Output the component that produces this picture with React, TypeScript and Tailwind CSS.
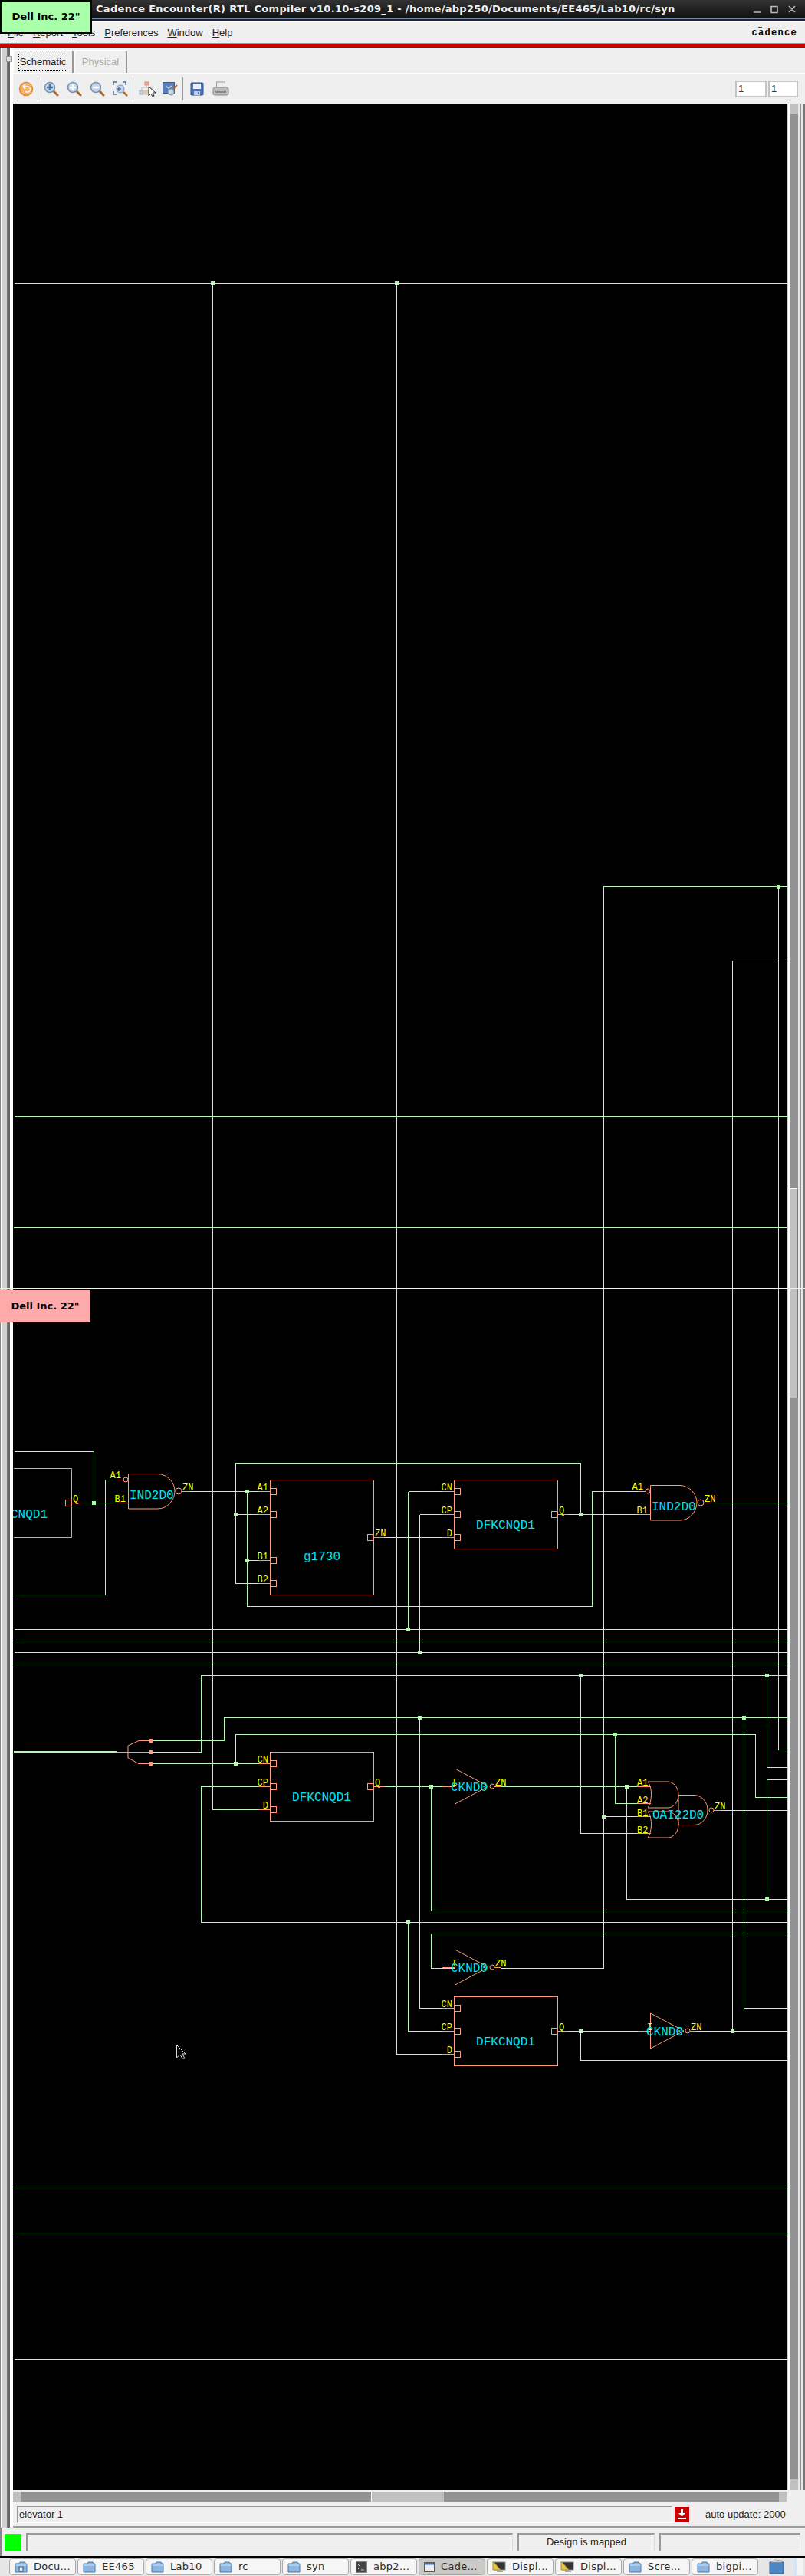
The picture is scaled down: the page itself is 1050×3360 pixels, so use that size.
const WIRE = "#b4f8b4";
const CELL = "#ff9b7a";
const mono = '"Liberation Mono", monospace';

// every net as a polyline, in page coordinates
const wires: number[][] = [
  [18, 369, 1026, 369],
  [277, 369, 277, 2360, 352, 2360],
  [517, 369, 517, 2679, 592, 2679],
  [1026, 1156, 787, 1156, 787, 2567, 652, 2567],
  [1015, 1156, 1015, 2282, 1026, 2282],
  [1026, 1253, 955, 1253, 955, 2649],
  [18, 1456, 1026, 1456],
  [18, 1893, 122, 1893, 122, 1960],
  [93, 1960, 167, 1960],
  [18, 2080, 137, 2080, 137, 1930, 161, 1930],
  [238, 1945, 352, 1945],
  [322, 1945, 322, 2095, 772, 2095, 772, 1945, 841, 1945],
  [757, 1975, 757, 1908, 307, 1908, 307, 2065, 352, 2065],
  [307, 1975, 352, 1975],
  [322, 2035, 352, 2035],
  [487, 2005, 592, 2005],
  [532, 1945, 592, 1945],
  [532, 1945, 532, 2125],
  [547, 1975, 592, 1975],
  [547, 1975, 547, 2155],
  [727, 1975, 848, 1975],
  [902, 1960, 1026, 1960],
  [18, 2125, 1026, 2125],
  [18, 2140, 1026, 2140],
  [18, 2155, 1026, 2155],
  [18, 2170, 1026, 2170],
  [1026, 2185, 262, 2185, 262, 2285, 197, 2285],
  [197, 2270, 292, 2270, 292, 2240, 1026, 2240],
  [197, 2300, 352, 2300],
  [307, 2300, 307, 2262, 985, 2262, 985, 2344, 1026, 2344],
  [352, 2330, 262, 2330, 262, 2507, 1026, 2507],
  [487, 2330, 577, 2330],
  [547, 2240, 547, 2619, 592, 2619],
  [757, 2185, 757, 2391, 848, 2391],
  [1000, 2185, 1000, 2305, 1026, 2305],
  [970, 2240, 970, 2619, 1026, 2619],
  [562, 2330, 562, 2492, 1026, 2492],
  [647, 2330, 848, 2330],
  [817, 2330, 817, 2477, 1026, 2477],
  [1000, 2477, 1000, 2321, 1026, 2321],
  [802, 2262, 802, 2352, 848, 2352],
  [787, 2369, 848, 2369],
  [931, 2361, 1026, 2361],
  [1026, 2522, 562, 2522, 562, 2567, 593, 2567],
  [532, 2507, 532, 2649, 592, 2649],
  [727, 2649, 848, 2649],
  [757, 2649, 757, 2687, 1026, 2687],
  [902, 2649, 1026, 2649],
  [18, 2852, 1026, 2852],
  [18, 2912, 1026, 2912],
  [18, 3077, 1026, 3077],
];

const junctions: [number, number][] = [
  [277, 369], [517, 369], [1015, 1156], [122, 1960], [322, 1945], [307, 1975], [322, 2035],
  [757, 1975], [532, 2125], [547, 2155], [757, 2185], [1000, 2185], [547, 2240], [970, 2240],
  [802, 2262], [307, 2300], [562, 2330], [817, 2330], [787, 2369], [1000, 2477], [532, 2507],
  [757, 2649], [955, 2649],
];

function Label({ x, y, end, children }: { x: number; y: number; end?: boolean; children: string }) {
  return (
    <text x={x} y={y} textAnchor={end ? "end" : "start"} fontSize={12} fontFamily={mono} fill="#ffff00">
      {children}
    </text>
  );
}

function PinLeft({ x, y, label }: { x: number; y: number; label: string }) {
  return (
    <g>
      <path d={`M${x - 15} ${y + 0.5}H${x}`} stroke={CELL} />
      <rect x={x + 0.5} y={y - 3.5} width={8} height={8} fill="none" stroke={CELL} />
      <Label x={x - 2} y={y - 1} end>{label}</Label>
    </g>
  );
}

function PinRight({ x, y, label }: { x: number; y: number; label: string }) {
  return (
    <g>
      <path d={`M${x} ${y + 0.5}H${x + 14}`} stroke={CELL} />
      <rect x={x - 7.5} y={y - 3.5} width={7} height={8} fill="none" stroke={CELL} />
      <Label x={x + 2} y={y - 1}>{label}</Label>
    </g>
  );
}

function Dff({ x, y }: { x: number; y: number }) {
  return (
    <g>
      <rect x={x + 0.5} y={y + 0.5} width={135} height={90} fill="none" stroke={CELL} />
      <PinLeft x={x} y={y + 15} label="CN" />
      <PinLeft x={x} y={y + 45} label="CP" />
      <PinLeft x={x} y={y + 75} label="D" />
      <PinRight x={x + 135} y={y + 45} label="Q" />
      <text x={x + 67.5} y={y + 64} textAnchor="middle" fontSize={16} fontFamily={mono} fill="#00e5f0">DFKCNQD1</text>
    </g>
  );
}

function Nand({ x, y }: { x: number; y: number }) {
  return (
    <g>
      <path d={`M${x + 0.5} ${y + 0.5}H${x + 39}C${x + 52} ${y + 1} ${x + 61} ${y + 12} ${x + 61} ${y + 23}C${x + 61} ${y + 34} ${x + 52} ${y + 46} ${x + 39} ${y + 46}H${x + 0.5}Z`} fill="none" stroke={CELL} />
      <circle cx={x - 3} cy={y + 8} r={3} fill="#000" stroke={CELL} />
      <circle cx={x + 66} cy={y + 23} r={4} fill="#000" stroke={CELL} />
      <path d={`M${x - 15} ${y + 8.5}H${x - 6}M${x - 15} ${y + 38.5}H${x}M${x + 70} ${y + 23.5}H${x + 80}`} stroke={CELL} />
      <Label x={x - 9} y={y + 6} end>A1</Label>
      <Label x={x - 3} y={y + 37} end>B1</Label>
      <Label x={x + 71} y={y + 22}>ZN</Label>
      <text x={x + 2} y={y + 33} fontSize={16} fontFamily={mono} fill="#00e5f0">IND2D0</text>
    </g>
  );
}

function Inv({ x, y }: { x: number; y: number }) {
  return (
    <g>
      <path d={`M${x + 0.5} ${y - 23}V${y + 23}L${x + 44} ${y}Z`} fill="none" stroke={CELL} />
      <circle cx={x + 49} cy={y} r={3} fill="#000" stroke={CELL} />
      <path d={`M${x - 16} ${y + 0.5}H${x}M${x + 52} ${y + 0.5}H${x + 60}`} stroke={CELL} />
      <Label x={x - 4} y={y - 1}>I</Label>
      <Label x={x + 53} y={y - 1}>ZN</Label>
      <text x={x - 5} y={y + 6} fontSize={16} fontFamily={mono} fill="#00e5f0">CKND0</text>
    </g>
  );
}

function Oai() {
  const or = (y: number) => `M845 ${y}H871C879 ${y} 885 ${y + 8} 885 ${y + 17}C885 ${y + 26} 879 ${y + 34} 871 ${y + 34}H845C850 ${y + 28} 852 ${y + 8} 845 ${y}Z`;
  const labels: [string, number][] = [["A1", 2329], ["A2", 2352], ["B1", 2369], ["B2", 2391]];
  return (
    <g>
      <path d={or(2324)} fill="none" stroke={CELL} />
      <path d={or(2363)} fill="none" stroke={CELL} />
      <path d="M885 2341.5H906C916 2342 923 2351 923 2361C923 2371 916 2380 906 2380.5H885Z" fill="none" stroke={CELL} />
      <circle cx={928} cy={2361} r={3} fill="#000" stroke={CELL} />
      <path d="M931 2361.5H940M831 2330.5H849M831 2352.5H849M831 2369.5H849M831 2391.5H849" stroke={CELL} />
      {labels.map(([t, y]) => (
        <Label key={t} x={831} y={y}>{t}</Label>
      ))}
      <Label x={932} y={2360}>ZN</Label>
      <text x={851} y={2372} fontSize={16} fontFamily={mono} fill="#00e5f0">OAI22D0</text>
    </g>
  );
}

function Schematic() {
  const g1730: [string, number][] = [["A1", 1945], ["A2", 1975], ["B1", 2035], ["B2", 2065]];
  return (
    <svg width={1010} height={3113} viewBox="17 135 1010 3113" className="block shrink-0 bg-black">
      <g fill="none" stroke={WIRE} shapeRendering="crispEdges">
        {wires.map((w, i) => (
          <polyline key={i} points={w.map((v) => v + 0.5).join(" ")} />
        ))}
        <path d="M18 1600.5H1026M18 2284.5H152" strokeWidth={2} />
      </g>
      {junctions.map(([x, y]) => (
        <rect key={`${x}-${y}`} x={x - 2} y={y - 2} width={5} height={5} fill={WIRE} />
      ))}
      <path d="M18 1915.5H93.500V2005.500H18" fill="none" stroke={CELL} />
      <text x={62} y={1980} textAnchor="end" fontSize={16} fontFamily={mono} fill="#00e5f0">DFKCNQD1</text>
      <PinRight x={93} y={1960} label="Q" />
      <Nand x={167} y={1922} />
      <rect x={352.5} y={1930.5} width={135} height={150} fill="none" stroke={CELL} />
      {g1730.map(([t, py]) => (
        <PinLeft key={t} x={352} y={py} label={t} />
      ))}
      <PinRight x={487} y={2005} label="ZN" />
      <text x={420} y={2035} textAnchor="middle" fontSize={16} fontFamily={mono} fill="#00e5f0">g1730</text>
      <Dff x={592} y={1930} />
      <Nand x={848} y={1937} />
      <path d="M151 2285.5H167V2277L181 2270.5H197M167 2285.5V2293L181 2300.5H197M167 2285.5H197" fill="none" stroke={CELL} />
      {[2270, 2285, 2300].map((y) => (
        <rect key={y} x={195} y={y - 2} width={5} height={5} fill={CELL} />
      ))}
      <Dff x={352} y={2285} />
      <Inv x={593} y={2330} />
      <Oai />
      <Inv x={593} y={2566} />
      <Dff x={592} y={2604} />
      <Inv x={848} y={2649} />
      <path d="M230.5 2667.5V2684L235 2680L238 2685H241L238 2679H242Z" fill="#000" stroke="#d8d8d8" />
    </svg>
  );
}

function Lens({ kind }: { kind: "fit" | "in" | "out" }) {
  return (
    <svg width={20} height={20} viewBox="0 0 20 20">
      <path d="M11 11l7 7" stroke="#a8682a" strokeWidth={3} strokeLinecap="round" />
      <circle cx={8} cy={8} r={6.5} fill="#c5d7ea" stroke="#7b93ad" strokeWidth={1.5} />
      {kind !== "out" && <path d="M8 4v8" stroke={kind === "in" ? "#fff" : "#4a78a8"} strokeWidth={2.5} />}
      <path d="M4 8h8" stroke={kind === "fit" ? "#4a78a8" : "#fff"} strokeWidth={2.5} />
    </svg>
  );
}

function ToolbarIcons() {
  return (
    <div className="flex items-center pl-[7px]">
      <svg width={20} height={20} viewBox="0 0 20 20">
        <circle cx={10} cy={10} r={8.5} fill="#f6b26b" stroke="#df8a2e" strokeWidth={1.5} />
        <path d="M6 7h6a3.5 3.5 0 0 1 0 7H9M6 7l3-3M6 7l3 3" fill="none" stroke="#fff" strokeWidth={1.5} />
      </svg>
      <div className="ml-[5px] mr-[7px] h-[30px] w-px bg-[#999]" />
      <div className="flex gap-[10px]">
        <Lens kind="fit" />
        <Lens kind="in" />
        <Lens kind="out" />
        <svg width={20} height={20} viewBox="0 0 20 20">
          <path d="M1 5V1h4M13 1h4v4M1 13v4h4" fill="none" stroke="#52718f" strokeWidth={1.5} />
          <circle cx={10} cy={10} r={5} fill="#c5d7ea" stroke="#7b93ad" />
          <path d="M8 7v6M5 10h6" stroke="#4a78a8" strokeWidth={1.5} />
          <path d="M14 14l5 5" stroke="#a8682a" strokeWidth={2.5} />
        </svg>
      </div>
      <div className="ml-[6px] mr-[7px] h-[30px] w-px bg-[#999]" />
      <svg width={22} height={22} viewBox="0 0 22 22">
        <rect x={8} y={2} width={5} height={4} fill="#eba9a0" stroke="#d98c80" />
        <path d="M10.500 6v3M4 13V9h13v4" fill="none" stroke="#bbb" />
        <rect x={1} y={13} width={5} height={5} fill="#c3ccd6" stroke="#aab" />
        <rect x={8} y={13} width={5} height={5} fill="#e8c9a8" stroke="#cba" />
        <path d="M13 8v12l3-3 2 4 2-1-2-4h4Z" fill="#fff" stroke="#222" />
      </svg>
      <svg className="ml-[9px]" width={20} height={20} viewBox="0 0 20 20">
        <rect x={0.5} y={1.5} width={15} height={14} fill="#5a7fb8" stroke="#3a5a90" />
        <path d="M4 6l4 3 4-3" fill="none" stroke="#c5d7ea" strokeWidth={1.5} />
        <circle cx={11} cy={14} r={4} fill="#c5d7ea" stroke="#7b93ad" />
        <path d="M14 10l5-5" stroke="#a8682a" strokeWidth={2} />
      </svg>
      <div className="ml-[6px] mr-[9px] h-[30px] w-px bg-[#999]" />
      <svg width={18} height={18} viewBox="0 0 18 18">
        <rect x={1} y={1} width={16} height={16} rx={1} fill="#5273b5" stroke="#34508c" />
        <rect x={4} y={2} width={10} height={7} fill="#eef2f8" />
        <rect x={5} y={12} width={8} height={5} fill="#c6cfdd" />
        <rect x={10} y={13} width={2} height={3} fill="#5273b5" />
      </svg>
      <svg className="ml-[11px]" width={22} height={20} viewBox="0 0 22 20">
        <rect x={5.5} y={1} width={11} height={7} fill="#eee" stroke="#999" />
        <rect x={1} y={8} width={20} height={10} rx={2} fill="#bdbdbd" stroke="#8a8a8a" />
        <rect x={4} y={13} width={14} height={2} fill="#888" />
      </svg>
    </div>
  );
}

function Folder({ docs }: { docs?: boolean }) {
  return (
    <svg width={17} height={15} viewBox="0 0 17 15">
      <path d="M1 3h5l1-2h6l1 2h2v11H1Z" fill="#8db6e0" stroke="#4a78a8" />
      <path d="M1.500 5h14" stroke="#cfe0f2" />
      {docs && <rect x={6} y={7} width={5} height={6} fill="#dfeaf5" stroke="#33577f" />}
    </svg>
  );
}

function Display() {
  return (
    <svg width={18} height={16} viewBox="0 0 18 16">
      <rect x={3} y={2} width={14} height={10} fill="#333" stroke="#888" />
      <path d="M1 1l10 11H1Z" fill="#e9c84a" stroke="#a98f25" />
      <path d="M6 13h8v2H6Z" fill="#aaa" />
    </svg>
  );
}

const tasks = [
  { label: "Docu...", icon: <Folder docs /> },
  { label: "EE465", icon: <Folder /> },
  { label: "Lab10", icon: <Folder /> },
  { label: "rc", icon: <Folder /> },
  { label: "syn", icon: <Folder /> },
  {
    label: "abp2...",
    icon: (
      <svg width={15} height={15} viewBox="0 0 15 15">
        <rect x={0.5} y={0.5} width={14} height={14} fill="#444" stroke="#888" />
        <path d="M3 4l3 3-3 3M7 11h4" fill="none" stroke="#ddd" />
      </svg>
    ),
  },
  {
    label: "Cade...",
    active: true,
    icon: (
      <svg width={14} height={13} viewBox="0 0 14 13">
        <rect x={0.5} y={0.5} width={13} height={12} fill="#eee" stroke="#555" />
        <rect x={1} y={1} width={12} height={2.5} fill="#3f6fb5" />
      </svg>
    ),
  },
  { label: "Displ...", icon: <Display /> },
  { label: "Displ...", icon: <Display /> },
  { label: "Scre...", icon: <Folder /> },
  { label: "bigpi...", icon: <Folder /> },
];

function Field({ className, children }: { className: string; children?: string }) {
  return (
    <div className={`flex h-[24px] items-center justify-center border-t-2 border-l-2 border-t-[#999] border-l-[#999] border-r border-b border-r-[#ddd] border-b-[#ddd] bg-[#efefef] text-[13px] text-[#222] ${className}`}>
      {children}
    </div>
  );
}

export default function App() {
  return (
    <div className="relative h-[3360px] w-[1050px] overflow-hidden bg-[#efefef] font-['Liberation_Sans',sans-serif]">
      {/* title bar */}
      <div className="flex h-[24px] items-center justify-between bg-gradient-to-b from-[#333] to-[#111] pl-[125px] pr-[6px] font-['DejaVu_Sans',sans-serif] text-[13px] font-bold tracking-[0.3px] text-[#f2f2f2]">
        <span>Cadence Encounter(R) RTL Compiler v10.10-s209_1 - /home/abp250/Documents/EE465/Lab10/rc/syn</span>
        <svg width={62} height={12} viewBox="0 0 62 12" fill="none" stroke="#bbb" strokeWidth={1.6}>
          <path d="M1 10h9M24 2.500h8v8h-8ZM47 2l8 8M55 2l-8 8" />
        </svg>
      </div>
      <div className="h-px bg-[#6d8cb5]" />
      <div className="h-[2px] bg-[#222]" />

      {/* menu bar */}
      <div className="flex h-[29px] items-center justify-between border-t-2 border-t-white pl-[10px] pr-[10px] text-[13px] text-[#222]">
        <div className="flex gap-[12px]">
          <span><u>F</u>ile</span>
          <span><u>R</u>eport</span>
          <span><u>T</u>ools</span>
          <span><u>P</u>references</span>
          <span><u>W</u>indow</span>
          <span><u>H</u>elp</span>
        </div>
        <span className="relative font-['Liberation_Mono',monospace] text-[12px] font-bold leading-none tracking-[1.3px] text-black">
          <span className="absolute left-[9px] top-[-2px] h-px w-[5px] bg-[#c00]" />
          cadence
        </span>
      </div>
      <div className="h-[2px] bg-[#999]" />
      <div className="h-[4px] bg-[#c80000]" />

      <div className="flex h-[3235px]">
        {/* sash on the left */}
        <div className="relative flex w-[17px] shrink-0">
          <div className="w-px bg-[#888]" />
          <div className="w-[2px] bg-white" />
          <div className="w-[6px] bg-[#cfcfcf]" />
          <div className="w-[1px] bg-[#777]" />
          <div className="w-[3px] bg-[#666]" />
          <div className="w-[4px] bg-white" />
          <div className="absolute left-[8px] top-[11px] h-[8px] w-[8px] border border-[#999] bg-[#ddd]" />
        </div>

        <div className="flex w-[1033px] flex-col">
          {/* tabs */}
          <div className="flex h-[34px] shrink-0 items-end border-b border-b-white pr-[4px] text-[13px]">
            <div className="ml-[-1px] flex h-[30px] w-[80px] items-center justify-center rounded-t-[4px] border-t-2 border-l-2 border-t-white border-l-white border-r-2 border-r-[#999]">
              <span className="border border-dotted border-black px-[1px] text-[#222]">Schematic</span>
            </div>
            <div className="flex h-[30px] w-[70px] items-center justify-center rounded-t-[4px] border-t-2 border-l-2 border-t-white border-l-white border-r-2 border-r-[#999] text-[#aaa]">
              Physical
            </div>
          </div>

          {/* toolbar */}
          <div className="flex h-[39px] shrink-0 items-center justify-between pr-[9px]">
            <ToolbarIcons />
            <div className="flex gap-[2px] text-[13px] text-[#333]">
              <div className="flex h-[22px] w-[41px] items-center border-2 border-[#c4c4c4] bg-white pl-[2px]">1</div>
              <div className="flex h-[22px] w-[39px] items-center border-2 border-[#c4c4c4] bg-white pl-[2px]">1</div>
            </div>
          </div>

          {/* canvas with its vertical scrollbar */}
          <div className="flex h-[3113px] shrink-0">
            <Schematic />
            <div className="flex w-[23px] shrink-0">
              <div className="w-px bg-[#cfcfcf]" />
              <div className="w-[2px] bg-white" />
              <div className="flex w-[11px] flex-col bg-[#929292]">
                <div className="h-[14px] bg-[#c0c0c0]" />
                <div className="mt-[1401px] h-[274px] border-l border-t border-l-white border-t-white border-r border-b border-r-[#777] border-b-[#777] bg-[#c0c0c0]" />
                <div className="mt-auto h-[14px] bg-[#c0c0c0]" />
              </div>
              <div className="w-[2px] bg-[#e8e8e8]" />
              <div className="w-[2px] bg-[#929292]" />
              <div className="w-[3px] bg-[#e8e8e8]" />
              <div className="w-[2px] bg-[#777]" />
            </div>
          </div>

          {/* horizontal scrollbar */}
          <div className="flex h-[16px] w-[1010px] shrink-0 items-center">
            <div className="flex h-[13px] w-full bg-[#929292]">
              <div className="h-full w-[11px] bg-[#c0c0c0]" />
              <div className="ml-[456px] h-full w-[95px] border-l border-t border-l-white border-t-white bg-[#c0c0c0]" />
              <div className="ml-auto h-full w-[11px] bg-[#c0c0c0]" />
            </div>
          </div>

          {/* status row */}
          <div className="flex h-[31px] shrink-0 items-center pl-[5px] text-[13px] text-[#222]">
            <div className="flex h-[22px] w-[855px] items-center border-t border-l border-t-[#999] border-l-[#999] border-r border-b border-r-white border-b-white pl-[2px]">
              elevator 1
            </div>
            <div className="ml-[3px] flex h-[20px] w-[19px] items-center justify-center bg-[#c80000]">
              <svg width={11} height={13} viewBox="0 0 11 13">
                <path d="M4 0h3v5h3l-4.500 4.500L1 5h3ZM0 11h11v2H0Z" fill="#fff" />
              </svg>
            </div>
            <span className="ml-[21px] whitespace-nowrap">auto update: 2000</span>
          </div>
          <div className="h-[2px] shrink-0 bg-[#999]" />
        </div>
      </div>

      {/* progress row */}
      <div className="flex h-[37px] items-center border-l-2 border-l-[#888] pl-[4px] pr-[6px]">
        <div className="h-[22px] w-[22px] shrink-0 bg-[#00ff00]" />
        <Field className="ml-[6px] w-[635px]" />
        <Field className="ml-[6px] w-[179px]">Design is mapped</Field>
        <Field className="ml-[6px] w-[184px]" />
      </div>
      <div className="h-[2px] bg-black" />

      {/* task bar */}
      <div className="flex h-[24px] items-center bg-[#e6e6e6] pl-[12px] font-['DejaVu_Sans',sans-serif] text-[13px] text-[#2b2b2b]">
        {tasks.map((t, i) => (
          <div
            key={i}
            className={`mr-[2px] flex h-[22px] w-[87px] shrink-0 items-center gap-[8px] rounded-[4px] border border-[#aaa] pl-[6px] ${t.active ? "bg-[#cbc9c5]" : "bg-[#f6f6f6]"}`}
          >
            {t.icon}
            <span className="tracking-[0.3px]">{t.label}</span>
          </div>
        ))}
        <svg className="ml-[12px] shrink-0" width={20} height={20} viewBox="0 0 20 20">
          <path d="M1 4h18v15H1Z" fill="#4d86c4" stroke="#2e5f96" />
          <path d="M3 4l5-3 9 1v2Z" fill="#e8e8e8" stroke="#aaa" />
        </svg>
        <div className="ml-[12px] h-[22px] w-[13px] shrink-0 border-l-4 border-l-[#d6e4f7] bg-[#f4f4f4]" />
      </div>

      {/* monitor labels and the seam between the two screens */}
      <div className="absolute left-0 right-0 top-[1680px] h-px bg-[#e8f5e8]" />
      <div className="absolute left-0 top-0 flex h-[44px] w-[120px] items-center justify-center border-2 border-black bg-[#aaffaa] font-['DejaVu_Sans',sans-serif] text-[13px] font-bold text-black">
        Dell Inc. 22"
      </div>
      <div className="absolute left-0 top-[1682px] flex h-[43px] w-[118px] items-center justify-center bg-[#ffaaaa] font-['DejaVu_Sans',sans-serif] text-[13px] font-bold text-black">
        Dell Inc. 22"
      </div>
    </div>
  );
}
